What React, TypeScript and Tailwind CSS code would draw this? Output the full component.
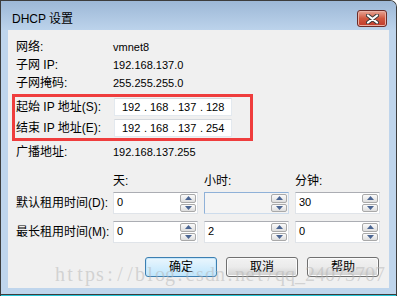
import clsx from "clsx";

const WATERMARK = "https://blog.csdn.net/qq_24073707";

const InfoRow = ({ label, value }: { label: string; value: string }) => (
  <div className="flex items-center h-[18px]">
    <div className="w-[97px] text-[12px]">{label}</div>
    <div className="text-[11px]">{value}</div>
  </div>
);

const IpField = ({ parts }: { parts: string[] }) => (
  <div className="w-[118px] h-[18px] bg-white border border-[#e3e9ef] border-t-[#d5d9de] flex items-center pl-[7px] text-[11px]">
    {parts.map((p, i) => (
      <div key={i} className="flex">
        <span className="w-[19px]">{p}</span>
        {i < 3 && <span className="w-[9px] text-center">.</span>}
      </div>
    ))}
  </div>
);

const Arrow = ({ up }: { up?: boolean }) => (
  <svg width="7" height="4" viewBox="0 0 7 4">
    {up ? <path d="M0 4 L3.5 0 L7 4 Z" fill="#4b6592" /> : <path d="M0 0 L3.5 4 L7 0 Z" fill="#4b6592" />}
  </svg>
);

const SpinBtn = ({ up }: { up?: boolean }) => (
  <div className="flex-1 border border-[#a9a9a9] rounded-[2px] bg-linear-to-b from-[#fbfbfb] to-[#dedede] flex items-center justify-center">
    <Arrow up={up} />
  </div>
);

const Spin = ({ value, disabled }: { value: string; disabled?: boolean }) => (
  <div
    className={clsx(
      "w-[85px] h-[22px] flex border",
      disabled
        ? "bg-[#f4f4f4] border-[#cddcec] border-t-[#8fb1d8] border-l-[#8fb1d8]"
        : "bg-white border-[#e0e4e9] border-t-[#abadb3]"
    )}
  >
    <div className="flex-1 pl-[3px] pt-[2px] text-[11px] leading-[14px]">{value}</div>
    <div className="w-[18px] flex flex-col gap-px p-px">
      <SpinBtn up />
      <SpinBtn />
    </div>
  </div>
);

const Button = ({ label, primary }: { label: string; primary?: boolean }) => (
  <div
    className={clsx(
      "w-[72px] h-[20px] rounded-[3px] border flex items-center justify-center text-[12px]",
      primary
        ? "border-[#3c7fb1] bg-linear-to-b from-[#eaf6fd] to-[#bee6fd] shadow-[inset_0_0_0_1px_#c6e6fa]"
        : "border-[#707070] bg-linear-to-b from-[#f2f2f2] via-[#ebebeb] to-[#cfcfcf] shadow-[inset_0_0_0_1px_#fcfcfc]"
    )}
  >
    {label}
  </div>
);

export default function App() {
  return (
    <div className="w-[397px] h-[296px] flex flex-col border-x border-t border-[#3d3d3d] rounded-tr-[7px] overflow-hidden bg-[#bfd5ec] text-black font-['Liberation_Sans','Noto_Sans_CJK_SC',sans-serif]">
      {/* title bar */}
      <div className="h-[29px] flex justify-between bg-linear-to-b from-[#9db8d7] to-[#bcd3eb]">
        <div className="pl-[11px] pt-[10px] text-[12px] leading-[16px]">DHCP 设置</div>
        <div className="mt-[9px] mr-[9px] w-[30px] h-[17px] rounded-[3px] border border-[#6b2c28] bg-linear-to-b from-[#e6a596] via-[#d0573f] to-[#c13a2a] flex items-center justify-center shadow-[inset_0_0_0_1px_#eab0a4]">
          <svg width="13" height="10" viewBox="0 0 13 10">
            <path d="M2 1.5 L11 8.5 M11 1.5 L2 8.5" stroke="#3a3a3a" strokeWidth="4" strokeLinecap="round" />
            <path d="M2 1.5 L11 8.5 M11 1.5 L2 8.5" stroke="#ffffff" strokeWidth="2.2" strokeLinecap="round" />
          </svg>
        </div>
      </div>

      <div className="flex h-[258px]">
        <div className="w-[7px]" />
        {/* client area */}
        <div className="w-[381px] relative bg-[#f0f0f0] flex flex-col pt-[8px]">
          <div className="pl-[8px]">
            <InfoRow label="网络:" value="vmnet8" />
            <InfoRow label="子网 IP:" value="192.168.137.0" />
            <InfoRow label="子网掩码:" value="255.255.255.0" />
          </div>

          <div className="mt-[2px] ml-[4px] w-[241px] h-[47px] border-[3px] border-[#ef3d3d] flex flex-col justify-between py-px pl-px">
            <div className="flex items-center h-[18px]">
              <div className="w-[98px] text-[12px]">起始 IP 地址(S):</div>
              <IpField parts={["192", "168", "137", "128"]} />
            </div>
            <div className="flex items-center h-[18px]">
              <div className="w-[98px] text-[12px]">结束 IP 地址(E):</div>
              <IpField parts={["192", "168", "137", "254"]} />
            </div>
          </div>

          <div className="pl-[8px] mt-[2px]">
            <InfoRow label="广播地址:" value="192.168.137.255" />
          </div>

          <div className="pl-[8px] mt-[11px] flex h-[18px] items-center text-[12px]">
            <div className="w-[97px]" />
            <div className="flex gap-[6px]">
              <div className="w-[85px]">天:</div>
              <div className="w-[85px]">小时:</div>
              <div className="w-[85px]">分钟:</div>
            </div>
          </div>

          <div className="pl-[8px] mt-[2px] flex items-center">
            <div className="w-[97px] text-[12px]">默认租用时间(D):</div>
            <div className="flex gap-[6px]">
              <Spin value="0" />
              <Spin value="" disabled />
              <Spin value="30" />
            </div>
          </div>

          <div className="pl-[8px] mt-[7px] flex items-center">
            <div className="w-[97px] text-[12px]">最长租用时间(M):</div>
            <div className="flex gap-[6px]">
              <Spin value="0" />
              <Spin value="2" />
              <Spin value="0" />
            </div>
          </div>

          <div className="mt-[14px] flex justify-end gap-[9px] pr-[10px]">
            <Button label="确定" primary />
            <Button label="取消" />
            <Button label="帮助" />
          </div>

          {/* watermark */}
          <div className="absolute left-[47px] top-[234px] flex text-[20px] leading-[20px] text-[#b4b4b4]/50 font-['Liberation_Serif',serif] pointer-events-none">
            {WATERMARK.split("").map((c, i) => (
              <span key={i} className="w-[10px] text-center">
                {c}
              </span>
            ))}
          </div>
        </div>
        <div className="w-[7px]" />
      </div>

      <div className="h-[6px]" />
      <div className="h-px bg-[#3d3d3d]" />
      <div className="h-px bg-[#27c5d8]" />
    </div>
  );
}
